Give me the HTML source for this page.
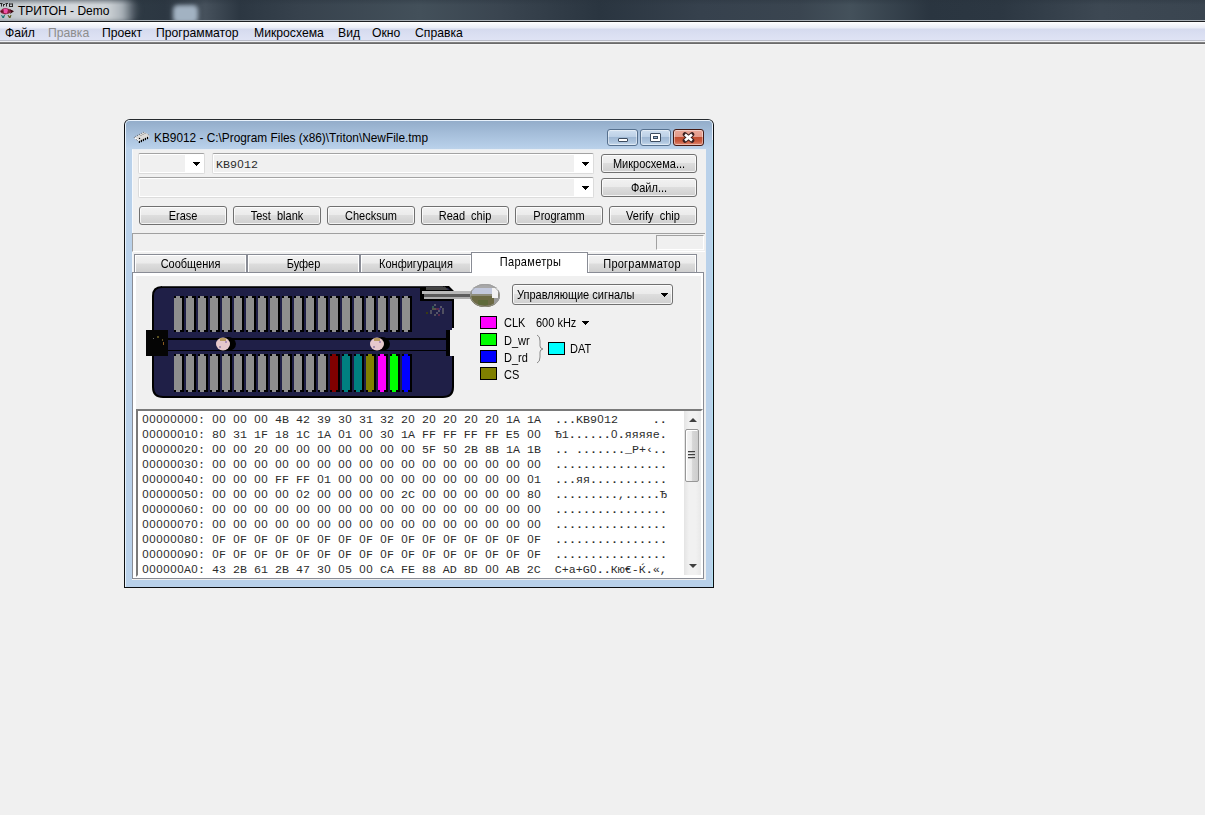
<!DOCTYPE html>
<html><head><meta charset="utf-8">
<style>
*{box-sizing:border-box;margin:0;padding:0}
html,body{width:1205px;height:815px;overflow:hidden;background:#f0f0f0;font-family:"Liberation Sans",sans-serif;}
.a{position:absolute}
#tb{left:0;top:0;width:1205px;height:20px;background:linear-gradient(90deg,#56626c 0px,#2e3a44 130px,#2c3742 165px,#46515c 205px,#2c3742 240px,#37424d 300px,#43505a 420px,#3a4550 500px,#2a3540 600px,#36414d 700px,#3a4550 800px,#44515b 850px,#2a3540 930px,#2c3742 1000px,#3d4853 1100px,#3a4550 1205px);}
#glow{left:-6px;top:-2px;width:146px;height:24px;border-radius:0 30px 30px 0;background:linear-gradient(90deg,#bcc2c8 0%,#cdd2d6 25%,#d4d8dc 55%,#cdd2d6 78%,#a9b1b8 88%,rgba(90,100,110,.6) 96%,rgba(60,70,80,0) 100%);filter:blur(2.5px)}
#blob{left:173px;top:5px;width:25px;height:18px;border-radius:5px;background:#a2b2c2;filter:blur(2px)}
#tbl1{left:0;top:20px;width:1205px;height:1px;background:#aab0b6}
#tbl2{left:0;top:21px;width:1205px;height:1px;background:#1d1f22}
#mb{left:0;top:22px;width:1205px;height:18px;background:linear-gradient(#ffffff 0px,#f0f2f9 4px,#eaedf7 6px,#d5daee 7px,#d9def1 11px,#dfe3f4 18px)}
#ml1{left:0;top:40px;width:1205px;height:1px;background:#b9bcc8}
#ml2{left:0;top:41px;width:1205px;height:1px;background:#eeeff3}
#ml3{left:0;top:42px;width:1205px;height:2px;background:linear-gradient(#8a8a8a,#5f5f5f)}
#ml4{left:0;top:44px;width:1205px;height:1px;background:#f6f6f6}
.mi{top:26px;font-size:12.2px;color:#000;white-space:pre;line-height:15px}
.ttl{font-size:12px;white-space:pre;line-height:15px}
</style><style>
.btn{border:1px solid #707070;border-radius:3px;background:linear-gradient(#f2f2f2 0,#ebebeb 45%,#dddddd 50%,#cfcfcf 100%);box-shadow:inset 0 0 0 1px rgba(255,255,255,.75)}
.btxt{font-size:11px;line-height:14px;text-align:center;white-space:pre;color:#000;transform:scaleY(1.125);transform-origin:0 3px}
.tab{border:1px solid #898c95;background:linear-gradient(#f2f2f2 0,#ebebeb 48%,#dddddd 52%,#cfcfcf 100%);box-shadow:inset 1px 1px 0 #fff,inset -1px 0 0 #fff}
.ttxt{font-size:11px;line-height:14px;text-align:center;white-space:pre;color:#000;transform:scaleY(1.125);transform-origin:0 3px}
.lbl{font-size:11px;line-height:14px;white-space:pre;color:#000;transform:scaleY(1.125);transform-origin:0 3px}
.hex{font-family:"Liberation Mono",monospace;font-size:11.667px;line-height:13px;white-space:pre;color:#2c2c2c;transform:none}
.hex b{font-weight:bold}
.hex i,.mono i{font-style:normal;font-family:"Liberation Sans",sans-serif;display:inline-block;width:7px;text-align:center;font-size:11.5px}
</style>
</head><body>
<div id="tb" class="a"></div>
<div style="position:absolute;left:0;top:0;width:1205px;height:20px;overflow:hidden">
<div id="glow" class="a"></div>
<div id="blob" class="a"></div>
<div class="a" style="left:0;top:0;width:1205px;height:5px;background:linear-gradient(rgba(40,50,60,.35),rgba(40,50,60,0))"></div>
</div>
<div id="tbl1" class="a"></div>
<div id="tbl2" class="a"></div>
<svg class="a" style="left:0;top:1px" width="16" height="18" viewBox="0 0 16 18">
<g fill="#2a2a2a"><rect x="0" y="2" width="2.5" height="1"/><rect x="1" y="2" width="1" height="3.5"/><rect x="3" y="3" width="1" height="2.5"/><rect x="3" y="3" width="2" height="1"/><rect x="6" y="2" width="1" height="3.5"/><rect x="5.5" y="2" width="2.5" height="1"/><rect x="9" y="2.5" width="3.5" height="1"/><rect x="9" y="2.5" width="1" height="3"/><rect x="12" y="2.5" width="1" height="3"/><rect x="9" y="5" width="4" height="1"/></g>
<path d="M0,10 L3,7.5 L6,7 L9,8 L13,10 L9,12.5 L5,13.5 L1,12 Z" fill="#8a2040"/>
<path d="M3.5,8 L6.5,7.5 L8,9 L7,12.5 L4,12 Z" fill="#f050a8"/>
<path d="M9.5,8 L14,10.3 L10,13 L11,10.5 Z" fill="#3a0a10"/>
<path d="M0.5,10.5 L2.5,9.5 L3,11.5 Z" fill="#501018"/>
<path d="M1,14 L2.5,17 L4,17 L5,14 L4,14 L3,15.5 L2,14 Z" fill="#1a7070"/>
<path d="M7.5,14 L9,17 L10.5,17 L11.5,14 L10.5,14 L9.7,15.5 L8.5,14 Z" fill="#5a5a20"/>
</svg>
<div class="a ttl" style="left:18px;top:4px;color:#000">ТРИТОН - Demo</div>
<div id="mb" class="a"></div>
<div id="ml1" class="a"></div>
<div id="ml2" class="a"></div>
<div id="ml3" class="a"></div>
<div id="ml4" class="a"></div>
<div class="a mi" style="left:5px">Файл</div>
<div class="a mi" style="left:48px;color:#8d8d8d">Правка</div>
<div class="a mi" style="left:102px">Проект</div>
<div class="a mi" style="left:156px">Программатор</div>
<div class="a mi" style="left:254px">Микросхема</div>
<div class="a mi" style="left:338px">Вид</div>
<div class="a mi" style="left:372px">Окно</div>
<div class="a mi" style="left:415px">Справка</div>

<!-- MDI child window -->
<div class="a" style="left:124px;top:119px;width:590px;height:469px;border:1px solid #0c0e10;border-top-color:#262a2e;border-radius:6px 6px 0 0;background:#b9d1ea"></div>
<div class="a" style="left:125px;top:120px;width:588px;height:467px;border:1px solid rgba(240,248,255,.85);border-bottom:none;border-radius:5px 5px 0 0"></div>
<div class="a" style="left:126px;top:121px;width:586px;height:28px;border-radius:4px 4px 0 0;background:linear-gradient(#93adca,#a3bcd8 40%,#b6cee8 90%,#bcd2ea)"></div>
<div class="a" style="left:712px;top:140px;width:1px;height:447px;background:#7fd0e8;opacity:.5"></div>
<!-- client -->
<div class="a" style="left:132px;top:149px;width:574px;height:431px;background:#f0f0f0;border-left:1px solid #f6f9fc;border-top:1px solid #e9eef4"></div>
<svg class="a" style="left:133px;top:130px" width="18" height="15" viewBox="0 0 18 15">
<path d="M1,8 L10.5,2 L16,4.5 L16.3,7.8 L6.5,11.3 Z" fill="#dcdad8"/>
<path d="M2,8 L5.8,11" stroke="#ffffff" stroke-width="1.1"/>
<g fill="#6a7078"><circle cx="1.3" cy="7.5" r=".55"/><circle cx="2.4" cy="6.3" r=".55"/><circle cx="4.4" cy="5.4" r=".55"/><circle cx="6.4" cy="4.4" r=".55"/><circle cx="8.5" cy="3.3" r=".55"/><circle cx="10.5" cy="2.3" r=".55"/><circle cx="3.3" cy="9.5" r=".5"/><circle cx="4.3" cy="10.6" r=".5"/><circle cx="15.3" cy="4.8" r=".5"/></g>
<g fill="#000"><ellipse cx="6.4" cy="11.9" rx=".7" ry="1.2"/><ellipse cx="8.4" cy="11" rx=".7" ry="1.2"/><ellipse cx="10.4" cy="10" rx=".7" ry="1.2"/><ellipse cx="12.4" cy="9" rx=".7" ry="1.2"/><ellipse cx="14.5" cy="8" rx=".7" ry="1.2"/><circle cx="6.5" cy="8.4" r=".7"/></g>
<g fill="#909090" opacity=".7"><rect x="7" y="5" width="2" height=".8"/><rect x="9" y="4" width="2" height=".8"/><rect x="11" y="3" width="2" height=".8"/></g>
</svg>
<div class="a" style="left:154px;top:131px;font-size:11.85px;line-height:15px;white-space:pre;color:#000">KB9012 - C:\Program Files (x86)\Triton\NewFile.tmp</div>

<div class="a" style="left:607px;top:129px;width:31px;height:17px;border:1px solid #56708e;border-radius:3px;background:linear-gradient(#cfdff0 0%,#bcd0e6 45%,#9fb8d4 50%,#aec5de 80%,#c8dbee 100%);box-shadow:inset 0 0 0 1px rgba(255,255,255,.45)"></div><div class="a" style="left:618px;top:138px;width:10px;height:4px;background:#fff;border:1px solid #3c4c60;border-radius:1px"></div>
<div class="a" style="left:640px;top:129px;width:31px;height:17px;border:1px solid #56708e;border-radius:3px;background:linear-gradient(#cfdff0 0%,#bcd0e6 45%,#9fb8d4 50%,#aec5de 80%,#c8dbee 100%);box-shadow:inset 0 0 0 1px rgba(255,255,255,.45)"></div><div class="a" style="left:650px;top:133px;width:11px;height:9px;background:#fff;border:1px solid #3c4c60;border-radius:1px"></div><div class="a" style="left:653px;top:136px;width:5px;height:3px;background:#9fb8d4;border:1px solid #3c4c60"></div>
<div class="a" style="left:673px;top:129px;width:31px;height:17px;border:1px solid #451a14;border-radius:3px;background:linear-gradient(#eaa898 0%,#e39a8a 45%,#c24e30 50%,#c95a3e 75%,#e08a74 100%);box-shadow:inset 0 0 0 1px rgba(255,255,255,.45)"></div><svg class="a" style="left:682px;top:132px" width="13" height="11" viewBox="0 0 13 11"><path d="M3,2.5 L10,8.5 M10,2.5 L3,8.5" stroke="#3a2020" stroke-width="4.6" stroke-linecap="round"/><path d="M3,2.5 L10,8.5 M10,2.5 L3,8.5" stroke="#fff" stroke-width="2.6" stroke-linecap="butt"/></svg>
<div class="a" style="left:138px;top:153px;width:67px;height:21px;border:1px solid #dcdcdc;border-top-color:#a3a3a3;border-radius:2px;background:#fff"></div><div class="a" style="left:140px;top:155px;width:45px;height:17px;background:#f0f0f0"></div><svg class="a" style="left:193px;top:162px" width="7" height="4" viewBox="0 0 7 4" shape-rendering="crispEdges"><path d="M0,0h7v1h-1v1h-1v1h-1v1h-1v-1h-1v-1h-1v-1h-1z" fill="#000"/></svg>
<div class="a" style="left:212px;top:153px;width:382px;height:21px;border:1px solid #dcdcdc;border-top-color:#a3a3a3;border-radius:2px;background:#fff"></div><div class="a" style="left:214px;top:155px;width:360px;height:17px;background:#f0f0f0"></div><svg class="a" style="left:582px;top:162px" width="7" height="4" viewBox="0 0 7 4" shape-rendering="crispEdges"><path d="M0,0h7v1h-1v1h-1v1h-1v1h-1v-1h-1v-1h-1v-1h-1z" fill="#000"/></svg><div class="a hex" style="left:216px;top:158px">KB9<i>0</i>12</div>
<div class="a" style="left:138px;top:177px;width:456px;height:21px;border:1px solid #dcdcdc;border-top-color:#a3a3a3;border-radius:2px;background:#fff"></div><div class="a" style="left:140px;top:179px;width:434px;height:17px;background:#f0f0f0"></div><svg class="a" style="left:582px;top:186px" width="7" height="4" viewBox="0 0 7 4" shape-rendering="crispEdges"><path d="M0,0h7v1h-1v1h-1v1h-1v1h-1v-1h-1v-1h-1v-1h-1z" fill="#000"/></svg>
<div class="a btn" style="left:601px;top:154px;width:96px;height:19px"></div><div class="a btxt" style="left:601px;top:156px;width:96px">Микросхема...</div>
<div class="a btn" style="left:601px;top:178px;width:96px;height:19px"></div><div class="a btxt" style="left:601px;top:180px;width:96px">Файл...</div>
<div class="a btn" style="left:139px;top:206px;width:88px;height:19px"></div><div class="a btxt" style="left:139px;top:208px;width:88px">Erase</div>
<div class="a btn" style="left:233px;top:206px;width:88px;height:19px"></div><div class="a btxt" style="left:233px;top:208px;width:88px">Test&nbsp; blank</div>
<div class="a btn" style="left:327px;top:206px;width:88px;height:19px"></div><div class="a btxt" style="left:327px;top:208px;width:88px">Checksum</div>
<div class="a btn" style="left:421px;top:206px;width:88px;height:19px"></div><div class="a btxt" style="left:421px;top:208px;width:88px">Read&nbsp; chip</div>
<div class="a btn" style="left:515px;top:206px;width:88px;height:19px"></div><div class="a btxt" style="left:515px;top:208px;width:88px">Programm</div>
<div class="a btn" style="left:609px;top:206px;width:88px;height:19px"></div><div class="a btxt" style="left:609px;top:208px;width:88px">Verify&nbsp; chip</div>
<div class="a" style="left:132px;top:233px;width:573px;height:19px;border-top:1px solid #a0a0a0;border-left:1px solid #a0a0a0;border-bottom:1px solid #fff"></div>
<div class="a" style="left:656px;top:235px;width:48px;height:15px;border-top:1px solid #a0a0a0;border-left:1px solid #a0a0a0;border-bottom:1px solid #fff;border-right:1px solid #fff"></div>
<div class="a" style="left:132px;top:272px;width:572px;height:307px;border:1px solid #898c95;background:#f0f0f0;box-shadow:inset 3px 3px 0 #fff, inset -2px -3px 0 #fff"></div>
<div class="a tab" style="left:134px;top:254px;width:113px;height:19px"></div>
<div class="a ttxt" style="left:134px;top:256px;width:113px;">Сообщения</div>
<div class="a tab" style="left:247px;top:254px;width:113px;height:19px"></div>
<div class="a ttxt" style="left:247px;top:256px;width:113px;">Буфер</div>
<div class="a tab" style="left:360px;top:254px;width:112px;height:19px"></div>
<div class="a ttxt" style="left:360px;top:256px;width:112px;">Конфигурация</div>
<div class="a tab" style="left:587px;top:254px;width:110px;height:19px"></div>
<div class="a ttxt" style="left:587px;top:256px;width:110px;letter-spacing:.25px;">Программатор</div>
<div class="a" style="left:471px;top:252px;width:117px;height:21px;border:1px solid #898c95;border-bottom:none;background:#fff"></div>
<div class="a" style="left:472px;top:272px;width:115px;height:4px;background:#fff"></div>
<div class="a ttxt" style="left:472px;top:254px;width:117px;letter-spacing:.3px">Параметры</div>
<svg class="a" style="left:140px;top:280px" width="370" height="125" viewBox="140 280 370 125" shape-rendering="crispEdges"><path d="M152,296 Q152,286 162,286 L449,286 L454,291 L454,328 L450,328 L450,356 L454,356 L454,387 Q454,398 443,398 L163,398 Q152,398 152,387 Z" fill="#000" shape-rendering="geometricPrecision"/><path d="M154,296 Q154,288 162,288 L448,288 L452,292 L452,330 L446,330 L446,356 L452,356 L452,387 Q452,396 443,396 L163,396 Q154,396 154,387 Z" fill="#1f1f47" shape-rendering="geometricPrecision"/><rect x="162" y="286" width="281" height="1" fill="#38383c"/><path d="M443,286 L444,286 L450,291 L449,291 Z" fill="#38383c" shape-rendering="geometricPrecision"/><rect x="146" y="330" width="22" height="26" fill="#050505"/><rect x="153" y="338" width="1" height="1" fill="#6a6a70"/><rect x="157" y="336" width="2" height="2" fill="#5a5020"/><rect x="162" y="339" width="1" height="2" fill="#5a5020"/><rect x="163" y="342" width="1" height="3" fill="#8a5a20"/><rect x="168" y="338" width="278" height="2" fill="#000"/><rect x="168" y="350" width="278" height="1" fill="#000"/><rect x="174" y="296" width="10" height="36" fill="#000"/><rect x="176" y="296" width="4" height="2" fill="#8e8e8e"/><rect x="174" y="298" width="8" height="32" fill="#8e8e8e"/><rect x="176" y="330" width="4" height="2" fill="#8e8e8e"/><rect x="174" y="354" width="10" height="38" fill="#000"/><rect x="176" y="354" width="4" height="2" fill="#8e8e8e"/><rect x="174" y="356" width="8" height="34" fill="#8e8e8e"/><rect x="176" y="390" width="4" height="2" fill="#8e8e8e"/><rect x="186" y="296" width="10" height="36" fill="#000"/><rect x="188" y="296" width="4" height="2" fill="#8e8e8e"/><rect x="186" y="298" width="8" height="32" fill="#8e8e8e"/><rect x="188" y="330" width="4" height="2" fill="#8e8e8e"/><rect x="186" y="354" width="10" height="38" fill="#000"/><rect x="188" y="354" width="4" height="2" fill="#8e8e8e"/><rect x="186" y="356" width="8" height="34" fill="#8e8e8e"/><rect x="188" y="390" width="4" height="2" fill="#8e8e8e"/><rect x="198" y="296" width="10" height="36" fill="#000"/><rect x="200" y="296" width="4" height="2" fill="#8e8e8e"/><rect x="198" y="298" width="8" height="32" fill="#8e8e8e"/><rect x="200" y="330" width="4" height="2" fill="#8e8e8e"/><rect x="198" y="354" width="10" height="38" fill="#000"/><rect x="200" y="354" width="4" height="2" fill="#8e8e8e"/><rect x="198" y="356" width="8" height="34" fill="#8e8e8e"/><rect x="200" y="390" width="4" height="2" fill="#8e8e8e"/><rect x="210" y="296" width="10" height="36" fill="#000"/><rect x="212" y="296" width="4" height="2" fill="#8e8e8e"/><rect x="210" y="298" width="8" height="32" fill="#8e8e8e"/><rect x="212" y="330" width="4" height="2" fill="#8e8e8e"/><rect x="210" y="354" width="10" height="38" fill="#000"/><rect x="212" y="354" width="4" height="2" fill="#8e8e8e"/><rect x="210" y="356" width="8" height="34" fill="#8e8e8e"/><rect x="212" y="390" width="4" height="2" fill="#8e8e8e"/><rect x="222" y="296" width="10" height="36" fill="#000"/><rect x="224" y="296" width="4" height="2" fill="#8e8e8e"/><rect x="222" y="298" width="8" height="32" fill="#8e8e8e"/><rect x="224" y="330" width="4" height="2" fill="#8e8e8e"/><rect x="222" y="354" width="10" height="38" fill="#000"/><rect x="224" y="354" width="4" height="2" fill="#8e8e8e"/><rect x="222" y="356" width="8" height="34" fill="#8e8e8e"/><rect x="224" y="390" width="4" height="2" fill="#8e8e8e"/><rect x="234" y="296" width="10" height="36" fill="#000"/><rect x="236" y="296" width="4" height="2" fill="#8e8e8e"/><rect x="234" y="298" width="8" height="32" fill="#8e8e8e"/><rect x="236" y="330" width="4" height="2" fill="#8e8e8e"/><rect x="234" y="354" width="10" height="38" fill="#000"/><rect x="236" y="354" width="4" height="2" fill="#8e8e8e"/><rect x="234" y="356" width="8" height="34" fill="#8e8e8e"/><rect x="236" y="390" width="4" height="2" fill="#8e8e8e"/><rect x="246" y="296" width="10" height="36" fill="#000"/><rect x="248" y="296" width="4" height="2" fill="#8e8e8e"/><rect x="246" y="298" width="8" height="32" fill="#8e8e8e"/><rect x="248" y="330" width="4" height="2" fill="#8e8e8e"/><rect x="246" y="354" width="10" height="38" fill="#000"/><rect x="248" y="354" width="4" height="2" fill="#8e8e8e"/><rect x="246" y="356" width="8" height="34" fill="#8e8e8e"/><rect x="248" y="390" width="4" height="2" fill="#8e8e8e"/><rect x="258" y="296" width="10" height="36" fill="#000"/><rect x="260" y="296" width="4" height="2" fill="#8e8e8e"/><rect x="258" y="298" width="8" height="32" fill="#8e8e8e"/><rect x="260" y="330" width="4" height="2" fill="#8e8e8e"/><rect x="258" y="354" width="10" height="38" fill="#000"/><rect x="260" y="354" width="4" height="2" fill="#8e8e8e"/><rect x="258" y="356" width="8" height="34" fill="#8e8e8e"/><rect x="260" y="390" width="4" height="2" fill="#8e8e8e"/><rect x="270" y="296" width="10" height="36" fill="#000"/><rect x="272" y="296" width="4" height="2" fill="#8e8e8e"/><rect x="270" y="298" width="8" height="32" fill="#8e8e8e"/><rect x="272" y="330" width="4" height="2" fill="#8e8e8e"/><rect x="270" y="354" width="10" height="38" fill="#000"/><rect x="272" y="354" width="4" height="2" fill="#8e8e8e"/><rect x="270" y="356" width="8" height="34" fill="#8e8e8e"/><rect x="272" y="390" width="4" height="2" fill="#8e8e8e"/><rect x="282" y="296" width="10" height="36" fill="#000"/><rect x="284" y="296" width="4" height="2" fill="#8e8e8e"/><rect x="282" y="298" width="8" height="32" fill="#8e8e8e"/><rect x="284" y="330" width="4" height="2" fill="#8e8e8e"/><rect x="282" y="354" width="10" height="38" fill="#000"/><rect x="284" y="354" width="4" height="2" fill="#8e8e8e"/><rect x="282" y="356" width="8" height="34" fill="#8e8e8e"/><rect x="284" y="390" width="4" height="2" fill="#8e8e8e"/><rect x="294" y="296" width="10" height="36" fill="#000"/><rect x="296" y="296" width="4" height="2" fill="#8e8e8e"/><rect x="294" y="298" width="8" height="32" fill="#8e8e8e"/><rect x="296" y="330" width="4" height="2" fill="#8e8e8e"/><rect x="294" y="354" width="10" height="38" fill="#000"/><rect x="296" y="354" width="4" height="2" fill="#8e8e8e"/><rect x="294" y="356" width="8" height="34" fill="#8e8e8e"/><rect x="296" y="390" width="4" height="2" fill="#8e8e8e"/><rect x="306" y="296" width="10" height="36" fill="#000"/><rect x="308" y="296" width="4" height="2" fill="#8e8e8e"/><rect x="306" y="298" width="8" height="32" fill="#8e8e8e"/><rect x="308" y="330" width="4" height="2" fill="#8e8e8e"/><rect x="306" y="354" width="10" height="38" fill="#000"/><rect x="308" y="354" width="4" height="2" fill="#8e8e8e"/><rect x="306" y="356" width="8" height="34" fill="#8e8e8e"/><rect x="308" y="390" width="4" height="2" fill="#8e8e8e"/><rect x="318" y="296" width="10" height="36" fill="#000"/><rect x="320" y="296" width="4" height="2" fill="#8e8e8e"/><rect x="318" y="298" width="8" height="32" fill="#8e8e8e"/><rect x="320" y="330" width="4" height="2" fill="#8e8e8e"/><rect x="318" y="354" width="10" height="38" fill="#000"/><rect x="320" y="354" width="4" height="2" fill="#8e8e8e"/><rect x="318" y="356" width="8" height="34" fill="#8e8e8e"/><rect x="320" y="390" width="4" height="2" fill="#8e8e8e"/><rect x="330" y="296" width="10" height="36" fill="#000"/><rect x="332" y="296" width="4" height="2" fill="#8e8e8e"/><rect x="330" y="298" width="8" height="32" fill="#8e8e8e"/><rect x="332" y="330" width="4" height="2" fill="#8e8e8e"/><rect x="330" y="354" width="10" height="38" fill="#000"/><rect x="332" y="354" width="4" height="2" fill="#800000"/><rect x="330" y="356" width="8" height="34" fill="#800000"/><rect x="332" y="390" width="4" height="2" fill="#800000"/><rect x="342" y="296" width="10" height="36" fill="#000"/><rect x="344" y="296" width="4" height="2" fill="#8e8e8e"/><rect x="342" y="298" width="8" height="32" fill="#8e8e8e"/><rect x="344" y="330" width="4" height="2" fill="#8e8e8e"/><rect x="342" y="354" width="10" height="38" fill="#000"/><rect x="344" y="354" width="4" height="2" fill="#008080"/><rect x="342" y="356" width="8" height="34" fill="#008080"/><rect x="344" y="390" width="4" height="2" fill="#008080"/><rect x="354" y="296" width="10" height="36" fill="#000"/><rect x="356" y="296" width="4" height="2" fill="#8e8e8e"/><rect x="354" y="298" width="8" height="32" fill="#8e8e8e"/><rect x="356" y="330" width="4" height="2" fill="#8e8e8e"/><rect x="354" y="354" width="10" height="38" fill="#000"/><rect x="356" y="354" width="4" height="2" fill="#008080"/><rect x="354" y="356" width="8" height="34" fill="#008080"/><rect x="356" y="390" width="4" height="2" fill="#008080"/><rect x="366" y="296" width="10" height="36" fill="#000"/><rect x="368" y="296" width="4" height="2" fill="#8e8e8e"/><rect x="366" y="298" width="8" height="32" fill="#8e8e8e"/><rect x="368" y="330" width="4" height="2" fill="#8e8e8e"/><rect x="366" y="354" width="10" height="38" fill="#000"/><rect x="368" y="354" width="4" height="2" fill="#808000"/><rect x="366" y="356" width="8" height="34" fill="#808000"/><rect x="368" y="390" width="4" height="2" fill="#808000"/><rect x="378" y="296" width="10" height="36" fill="#000"/><rect x="380" y="296" width="4" height="2" fill="#8e8e8e"/><rect x="378" y="298" width="8" height="32" fill="#8e8e8e"/><rect x="380" y="330" width="4" height="2" fill="#8e8e8e"/><rect x="378" y="354" width="10" height="38" fill="#000"/><rect x="380" y="354" width="4" height="2" fill="#ff00ff"/><rect x="378" y="356" width="8" height="34" fill="#ff00ff"/><rect x="380" y="390" width="4" height="2" fill="#ff00ff"/><rect x="390" y="296" width="10" height="36" fill="#000"/><rect x="392" y="296" width="4" height="2" fill="#8e8e8e"/><rect x="390" y="298" width="8" height="32" fill="#8e8e8e"/><rect x="392" y="330" width="4" height="2" fill="#8e8e8e"/><rect x="390" y="354" width="10" height="38" fill="#000"/><rect x="392" y="354" width="4" height="2" fill="#00ff00"/><rect x="390" y="356" width="8" height="34" fill="#00ff00"/><rect x="392" y="390" width="4" height="2" fill="#00ff00"/><rect x="402" y="296" width="10" height="36" fill="#000"/><rect x="404" y="296" width="4" height="2" fill="#8e8e8e"/><rect x="402" y="298" width="8" height="32" fill="#8e8e8e"/><rect x="404" y="330" width="4" height="2" fill="#8e8e8e"/><rect x="402" y="354" width="10" height="38" fill="#000"/><rect x="404" y="354" width="4" height="2" fill="#0000ff"/><rect x="402" y="356" width="8" height="34" fill="#0000ff"/><rect x="404" y="390" width="4" height="2" fill="#0000ff"/><ellipse cx="228" cy="344" rx="8" ry="7" fill="#000" shape-rendering="geometricPrecision"/><ellipse cx="223" cy="344" rx="7" ry="6.5" fill="#e6c8cc" shape-rendering="geometricPrecision"/><rect x="220" y="338" width="6" height="3" fill="#b89a60"/><rect x="219" y="346" width="2" height="2" fill="#a890b0"/><rect x="225" y="341" width="2" height="2" fill="#b090b8"/><ellipse cx="382" cy="344" rx="8" ry="7" fill="#000" shape-rendering="geometricPrecision"/><ellipse cx="377" cy="344" rx="7" ry="6.5" fill="#e6c8cc" shape-rendering="geometricPrecision"/><rect x="374" y="338" width="6" height="3" fill="#b89a60"/><rect x="373" y="346" width="2" height="2" fill="#a890b0"/><rect x="379" y="341" width="2" height="2" fill="#b090b8"/><path d="M420,288 L426,288 L426,290 L449,290 L454,291 L454,301 L420,301 Z" fill="#000"/><path d="M426,287 L445,287 L448,290 L426,290 Z" fill="#444444" shape-rendering="geometricPrecision"/><rect x="424" y="302" width="28" height="26" fill="#1f1f47"/><rect x="422" y="291" width="52" height="3" fill="#b9b9b9"/><rect x="424" y="294" width="50" height="3" fill="#5c5c5c"/><rect x="424" y="297" width="50" height="2" fill="#adadad"/><defs><clipPath id="kc"><ellipse cx="485" cy="295.5" rx="15" ry="11.5"/></clipPath></defs><g shape-rendering="geometricPrecision"><ellipse cx="485" cy="295.5" rx="15" ry="11.5" fill="#8a8a84"/><g clip-path="url(#kc)"><rect x="470" y="284" width="31" height="4" fill="#a8a8a8"/><rect x="472" y="288" width="24" height="6" fill="#c2c8dc"/><rect x="470" y="294" width="31" height="2" fill="#8e8c7a"/><rect x="470" y="296" width="26" height="11" fill="#6c6a44"/><rect x="478" y="300" width="10" height="5" fill="#5e6a3a"/><rect x="492" y="288" width="6" height="10" fill="#f2f2f2"/><rect x="494" y="298" width="6" height="6" fill="#9a9a98"/></g><ellipse cx="485" cy="295.5" rx="14.5" ry="11" fill="none" stroke="#9c9c9c" stroke-width="1" opacity=".8"/></g><g shape-rendering="crispEdges"><rect x="434" y="304" width="2" height="2" fill="#55556a"/><rect x="432" y="306" width="2" height="2" fill="#2e5a52"/><rect x="432" y="308" width="4" height="2" fill="#55554a"/><rect x="436" y="308" width="3" height="2" fill="#5a2a4a"/><rect x="439" y="308" width="2" height="2" fill="#3a2a7a"/><rect x="440" y="306" width="2" height="2" fill="#58586a"/><rect x="430" y="310" width="2" height="4" fill="#505060"/><rect x="442" y="308" width="2" height="6" fill="#505060"/><rect x="438" y="310" width="2" height="2" fill="#55556a"/><rect x="436" y="312" width="2" height="2" fill="#55556a"/><rect x="434" y="314" width="2" height="2" fill="#50505a"/><rect x="438" y="314" width="2" height="2" fill="#5a2a4a"/><rect x="426" y="312" width="2" height="2" fill="#3a3a14"/></g></svg>
<div class="a btn" style="left:512px;top:284px;width:161px;height:21px"></div><div class="a btxt" style="left:512px;top:286px;width:161px"></div>
<div class="a lbl" style="left:517px;top:287px">Управляющие сигналы</div>
<svg class="a" style="left:661px;top:293px" width="7" height="4" viewBox="0 0 7 4" shape-rendering="crispEdges"><path d="M0,0h7v1h-1v1h-1v1h-1v1h-1v-1h-1v-1h-1v-1h-1z" fill="#000"/></svg>
<div class="a" style="left:480px;top:316px;width:17px;height:13px;border:1px solid #000;background:#ff00ff"></div>
<div class="a" style="left:480px;top:333px;width:17px;height:13px;border:1px solid #000;background:#00ff00"></div>
<div class="a" style="left:480px;top:350px;width:17px;height:13px;border:1px solid #000;background:#0000ff"></div>
<div class="a" style="left:480px;top:367px;width:17px;height:13px;border:1px solid #000;background:#808000"></div>
<div class="a" style="left:548px;top:342px;width:17px;height:13px;border:1px solid #000;background:#00ffff"></div>
<div class="a lbl" style="left:504px;top:315px">CLK</div>
<div class="a lbl" style="left:536px;top:315px">600 kHz</div>
<div class="a lbl" style="left:504px;top:333px">D_wr</div>
<div class="a lbl" style="left:504px;top:350px">D_rd</div>
<div class="a lbl" style="left:504px;top:367px">CS</div>
<div class="a lbl" style="left:570px;top:341px">DAT</div>
<svg class="a" style="left:582px;top:321px" width="7" height="4" viewBox="0 0 7 4" shape-rendering="crispEdges"><path d="M0,0h7v1h-1v1h-1v1h-1v1h-1v-1h-1v-1h-1v-1h-1z" fill="#000"/></svg>
<svg class="a" style="left:534px;top:333px" width="12" height="32" viewBox="0 0 12 32"><path d="M3,2 Q6,3 6,8 L6,13 Q6,15.5 9,16 Q6,16.5 6,19 L6,24 Q6,29 3,30" fill="none" stroke="#8a8a8a" stroke-width="1"/></svg>
<div class="a" style="left:136px;top:409px;width:567px;height:168px;border-left:2px solid #7a7a7a;border-top:2px solid #7a7a7a;border-right:2px solid #fff;border-bottom:2px solid #fff;background:#fff"></div>
<div class="a hex" style="left:142px;top:413px"><i>0</i><i>0</i><i>0</i><i>0</i><i>0</i><i>0</i><i>0</i><i>0</i>: <i>0</i><i>0</i> <i>0</i><i>0</i> <i>0</i><i>0</i> 4B 42 39 3<i>0</i> 31 32 2<i>0</i> 2<i>0</i> 2<i>0</i> 2<i>0</i> 2<i>0</i> 1A 1A  <b>.</b><b>.</b><b>.</b>KB9<i>0</i>12     <b>.</b><b>.</b></div>
<div class="a hex" style="left:142px;top:428px"><i>0</i><i>0</i><i>0</i><i>0</i><i>0</i><i>0</i>1<i>0</i>: 8<i>0</i> 31 1F 18 1C 1A <i>0</i>1 <i>0</i><i>0</i> 3<i>0</i> 1A FF FF FF FF E5 <i>0</i><i>0</i>  Ђ1<b>.</b><b>.</b><b>.</b><b>.</b><b>.</b><b>.</b><i>0</i><b>.</b>яяяяе<b>.</b></div>
<div class="a hex" style="left:142px;top:443px"><i>0</i><i>0</i><i>0</i><i>0</i><i>0</i><i>0</i>2<i>0</i>: <i>0</i><i>0</i> <i>0</i><i>0</i> 2<i>0</i> <i>0</i><i>0</i> <i>0</i><i>0</i> <i>0</i><i>0</i> <i>0</i><i>0</i> <i>0</i><i>0</i> <i>0</i><i>0</i> <i>0</i><i>0</i> 5F 5<i>0</i> 2B 8B 1A 1B  <b>.</b><b>.</b> <b>.</b><b>.</b><b>.</b><b>.</b><b>.</b><b>.</b><b>.</b>_P+‹<b>.</b><b>.</b></div>
<div class="a hex" style="left:142px;top:458px"><i>0</i><i>0</i><i>0</i><i>0</i><i>0</i><i>0</i>3<i>0</i>: <i>0</i><i>0</i> <i>0</i><i>0</i> <i>0</i><i>0</i> <i>0</i><i>0</i> <i>0</i><i>0</i> <i>0</i><i>0</i> <i>0</i><i>0</i> <i>0</i><i>0</i> <i>0</i><i>0</i> <i>0</i><i>0</i> <i>0</i><i>0</i> <i>0</i><i>0</i> <i>0</i><i>0</i> <i>0</i><i>0</i> <i>0</i><i>0</i> <i>0</i><i>0</i>  <b>.</b><b>.</b><b>.</b><b>.</b><b>.</b><b>.</b><b>.</b><b>.</b><b>.</b><b>.</b><b>.</b><b>.</b><b>.</b><b>.</b><b>.</b><b>.</b></div>
<div class="a hex" style="left:142px;top:473px"><i>0</i><i>0</i><i>0</i><i>0</i><i>0</i><i>0</i>4<i>0</i>: <i>0</i><i>0</i> <i>0</i><i>0</i> <i>0</i><i>0</i> FF FF <i>0</i>1 <i>0</i><i>0</i> <i>0</i><i>0</i> <i>0</i><i>0</i> <i>0</i><i>0</i> <i>0</i><i>0</i> <i>0</i><i>0</i> <i>0</i><i>0</i> <i>0</i><i>0</i> <i>0</i><i>0</i> <i>0</i>1  <b>.</b><b>.</b><b>.</b>яя<b>.</b><b>.</b><b>.</b><b>.</b><b>.</b><b>.</b><b>.</b><b>.</b><b>.</b><b>.</b><b>.</b></div>
<div class="a hex" style="left:142px;top:488px"><i>0</i><i>0</i><i>0</i><i>0</i><i>0</i><i>0</i>5<i>0</i>: <i>0</i><i>0</i> <i>0</i><i>0</i> <i>0</i><i>0</i> <i>0</i><i>0</i> <i>0</i>2 <i>0</i><i>0</i> <i>0</i><i>0</i> <i>0</i><i>0</i> <i>0</i><i>0</i> 2C <i>0</i><i>0</i> <i>0</i><i>0</i> <i>0</i><i>0</i> <i>0</i><i>0</i> <i>0</i><i>0</i> 8<i>0</i>  <b>.</b><b>.</b><b>.</b><b>.</b><b>.</b><b>.</b><b>.</b><b>.</b><b>.</b>,<b>.</b><b>.</b><b>.</b><b>.</b><b>.</b>Ђ</div>
<div class="a hex" style="left:142px;top:503px"><i>0</i><i>0</i><i>0</i><i>0</i><i>0</i><i>0</i>6<i>0</i>: <i>0</i><i>0</i> <i>0</i><i>0</i> <i>0</i><i>0</i> <i>0</i><i>0</i> <i>0</i><i>0</i> <i>0</i><i>0</i> <i>0</i><i>0</i> <i>0</i><i>0</i> <i>0</i><i>0</i> <i>0</i><i>0</i> <i>0</i><i>0</i> <i>0</i><i>0</i> <i>0</i><i>0</i> <i>0</i><i>0</i> <i>0</i><i>0</i> <i>0</i><i>0</i>  <b>.</b><b>.</b><b>.</b><b>.</b><b>.</b><b>.</b><b>.</b><b>.</b><b>.</b><b>.</b><b>.</b><b>.</b><b>.</b><b>.</b><b>.</b><b>.</b></div>
<div class="a hex" style="left:142px;top:518px"><i>0</i><i>0</i><i>0</i><i>0</i><i>0</i><i>0</i>7<i>0</i>: <i>0</i><i>0</i> <i>0</i><i>0</i> <i>0</i><i>0</i> <i>0</i><i>0</i> <i>0</i><i>0</i> <i>0</i><i>0</i> <i>0</i><i>0</i> <i>0</i><i>0</i> <i>0</i><i>0</i> <i>0</i><i>0</i> <i>0</i><i>0</i> <i>0</i><i>0</i> <i>0</i><i>0</i> <i>0</i><i>0</i> <i>0</i><i>0</i> <i>0</i><i>0</i>  <b>.</b><b>.</b><b>.</b><b>.</b><b>.</b><b>.</b><b>.</b><b>.</b><b>.</b><b>.</b><b>.</b><b>.</b><b>.</b><b>.</b><b>.</b><b>.</b></div>
<div class="a hex" style="left:142px;top:533px"><i>0</i><i>0</i><i>0</i><i>0</i><i>0</i><i>0</i>8<i>0</i>: <i>0</i>F <i>0</i>F <i>0</i>F <i>0</i>F <i>0</i>F <i>0</i>F <i>0</i>F <i>0</i>F <i>0</i>F <i>0</i>F <i>0</i>F <i>0</i>F <i>0</i>F <i>0</i>F <i>0</i>F <i>0</i>F  <b>.</b><b>.</b><b>.</b><b>.</b><b>.</b><b>.</b><b>.</b><b>.</b><b>.</b><b>.</b><b>.</b><b>.</b><b>.</b><b>.</b><b>.</b><b>.</b></div>
<div class="a hex" style="left:142px;top:548px"><i>0</i><i>0</i><i>0</i><i>0</i><i>0</i><i>0</i>9<i>0</i>: <i>0</i>F <i>0</i>F <i>0</i>F <i>0</i>F <i>0</i>F <i>0</i>F <i>0</i>F <i>0</i>F <i>0</i>F <i>0</i>F <i>0</i>F <i>0</i>F <i>0</i>F <i>0</i>F <i>0</i>F <i>0</i>F  <b>.</b><b>.</b><b>.</b><b>.</b><b>.</b><b>.</b><b>.</b><b>.</b><b>.</b><b>.</b><b>.</b><b>.</b><b>.</b><b>.</b><b>.</b><b>.</b></div>
<div class="a hex" style="left:142px;top:563px"><i>0</i><i>0</i><i>0</i><i>0</i><i>0</i><i>0</i>A<i>0</i>: 43 2B 61 2B 47 3<i>0</i> <i>0</i>5 <i>0</i><i>0</i> CA FE 88 AD 8D <i>0</i><i>0</i> AB 2C  C+a+G<i>0</i><b>.</b><b>.</b>Кю€-Ќ<b>.</b>«,</div>
<div class="a" style="left:684px;top:411px;width:17px;height:164px;background:linear-gradient(90deg,#e4e4e4,#f1f1f1 30%,#f1f1f1 70%,#e8e8e8)"></div>
<div class="a" style="left:689px;top:418px;width:0;height:0;border-left:4px solid transparent;border-right:4px solid transparent;border-bottom:4px solid #404040"></div>
<div class="a" style="left:689px;top:564px;width:0;height:0;border-left:4px solid transparent;border-right:4px solid transparent;border-top:4px solid #404040"></div>
<div class="a" style="left:685px;top:429px;width:14px;height:53px;border:1px solid #979797;border-radius:2px;background:linear-gradient(90deg,#f5f5f5,#ececec 45%,#d6d6d6 55%,#cdcdcd);box-shadow:inset 1px 1px 0 #fff"></div>
<div class="a" style="left:688px;top:451px;width:7px;height:8px;background:repeating-linear-gradient(#404040 0 1px,#bdbdbd 1px 2px,transparent 2px 3px)"></div>
</body></html>
